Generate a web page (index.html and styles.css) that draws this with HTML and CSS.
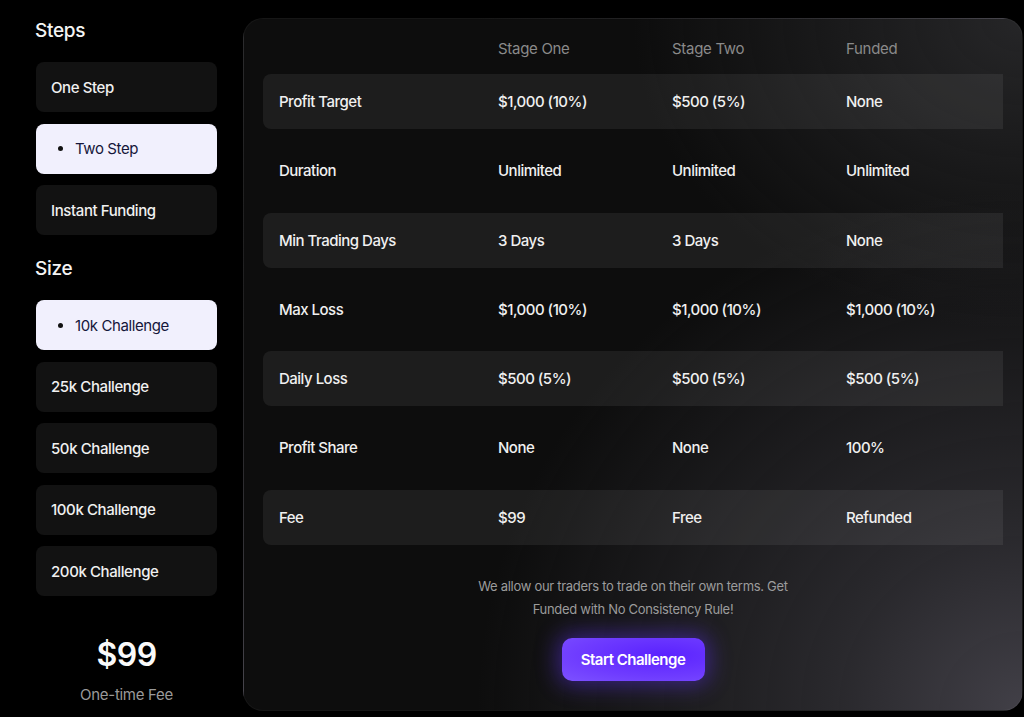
FILE: index.html
```html
<!DOCTYPE html>
<html lang="en">
<head>
<meta charset="utf-8">
<title>Challenges</title>
<link rel="stylesheet" href="styles.css">
</head>
<body>
<div class="page">
  <aside class="sidebar">
    <h2 class="side-title">Steps</h2>
    <div class="opts">
      <div class="opt">One Step</div>
      <div class="opt active"><span class="dot"></span>Two Step</div>
      <div class="opt">Instant Funding</div>
    </div>
    <h2 class="side-title size-title">Size</h2>
    <div class="opts">
      <div class="opt active"><span class="dot"></span>10k Challenge</div>
      <div class="opt">25k Challenge</div>
      <div class="opt">50k Challenge</div>
      <div class="opt">100k Challenge</div>
      <div class="opt">200k Challenge</div>
    </div>
    <div class="price">$99</div>
    <div class="price-note">One-time Fee</div>
  </aside>

  <main class="panel">
    <div class="thead">
      <span></span><span>Stage One</span><span>Stage Two</span><span>Funded</span>
    </div>
    <div class="rows">
      <div class="row striped"><span>Profit Target</span><span>$1,000 (10%)</span><span>$500 (5%)</span><span>None</span></div>
      <div class="row"><span>Duration</span><span>Unlimited</span><span>Unlimited</span><span>Unlimited</span></div>
      <div class="row striped"><span>Min Trading Days</span><span>3 Days</span><span>3 Days</span><span>None</span></div>
      <div class="row"><span>Max Loss</span><span>$1,000 (10%)</span><span>$1,000 (10%)</span><span>$1,000 (10%)</span></div>
      <div class="row striped"><span>Daily Loss</span><span>$500 (5%)</span><span>$500 (5%)</span><span>$500 (5%)</span></div>
      <div class="row"><span>Profit Share</span><span>None</span><span>None</span><span>100%</span></div>
      <div class="row striped"><span>Fee</span><span>$99</span><span>Free</span><span>Refunded</span></div>
    </div>
    <p class="note">We allow our traders to trade on their own terms. Get Funded with No Consistency Rule!</p>
    <div class="cta-wrap"><button class="cta">Start Challenge</button></div>
  </main>
</div>
</body>
</html>
```

FILE: styles.css
```css
* { box-sizing: border-box; }
html, body {
  margin: 0;
  padding: 0;
  background: #000;
  font-family: Inter, "Noto Sans", sans-serif;
  color: #f2f2f2;
}
.page {
  display: flex;
  align-items: flex-start;
  padding: 18px 0 0 36px;
  gap: 26px;
  height: 717px;
  overflow: hidden;
}
.sidebar {
  width: 181px;
  flex: none;
  display: flex;
  flex-direction: column;
}
.side-title {
  margin: 1px 0 19px -1px;
  font-size: 19px;
  font-weight: 500;
  line-height: 24px;
  color: #f4f4f4;
  letter-spacing: -0.3px;
}
.size-title { margin-top: 22px; }
.opts {
  display: flex;
  flex-direction: column;
  gap: 11.5px;
}
.opt {
  height: 50px;
  border-radius: 8px;
  background: #121212;
  display: flex;
  align-items: center;
  padding-left: 15px;
  font-size: 15px;
  font-weight: 500;
  letter-spacing: -0.4px;
  color: #f0f0f0;
}
.opt.active {
  background: #f1f0fd;
  color: #15163a;
  padding-left: 22px;
  font-weight: 400;
}
.dot {
  width: 5px;
  height: 5px;
  border-radius: 50%;
  background: #111;
  margin-right: 12px;
}
.price {
  margin-top: 39px;
  text-align: center;
  font-size: 32px;
  font-weight: 600;
  line-height: 40px;
  color: #fafafa;
  letter-spacing: -0.5px;
}
.price-note {
  margin-top: 10px;
  text-align: center;
  font-size: 15px;
  line-height: 20px;
  color: #9a9a9a;
  letter-spacing: -0.3px;
}
.panel {
  width: 780px;
  height: 693px;
  flex: none;
  border-radius: 20px;
  border: 1px solid rgba(255,255,255,0.04);
  background:
    radial-gradient(ellipse 70% 75% at 100% 100%, rgba(68,66,74,0.95) 0%, rgba(48,47,52,0.8) 35%, rgba(20,20,22,0) 100%),
    radial-gradient(ellipse 50% 45% at 100% 0%, rgba(40,40,42,0.9) 0%, rgba(20,20,20,0) 100%),
    #0d0d0d;
  padding: 19px 19px 0 19px;
  display: flex;
  flex-direction: column;
}
.thead, .row {
  display: grid;
  grid-template-columns: 219px 174px 174px 1fr;
  align-items: center;
  padding-left: 16px;
}
.thead {
  height: 21px;
  margin-bottom: 15px;
  font-size: 15px;
  color: #8a8a8a;
  letter-spacing: -0.3px;
}
.rows {
  display: flex;
  flex-direction: column;
  gap: 14.3px;
}
.row {
  height: 55px;
  font-size: 15px;
  font-weight: 500;
  color: #f0f0f0;
  letter-spacing: -0.5px;
  border-radius: 8px 0 0 8px;
}
.row.striped { background: rgba(255,255,255,0.065); }
.note {
  margin: 30px auto 0;
  width: 330px;
  text-align: center;
  font-size: 13px;
  line-height: 23px;
  color: #9c9c9c;
  letter-spacing: -0.3px;
}
.cta-wrap {
  display: flex;
  justify-content: center;
  margin-top: 17px;
}
.cta {
  width: 143px;
  height: 43px;
  border: none;
  border-radius: 10px;
  background: radial-gradient(ellipse at 70% 40%, #5a22ff 0%, #6f3cff 60%, #7d52ff 100%);
  color: #fff;
  font-family: Inter, "Noto Sans", sans-serif;
  font-size: 15px;
  font-weight: 600;
  letter-spacing: -0.5px;
  box-shadow: 0 0 22px 4px rgba(98,50,255,0.45);
}
```
